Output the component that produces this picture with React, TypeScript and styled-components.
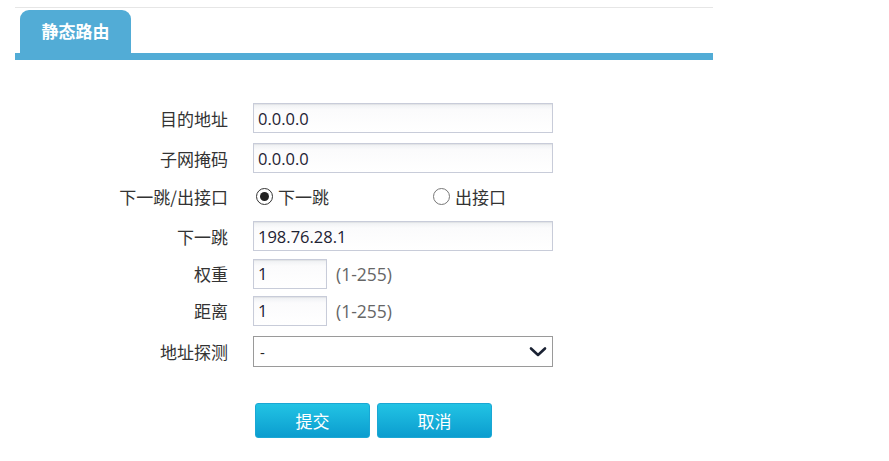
import React from "react";
import styled, { createGlobalStyle } from "styled-components";

const Global = createGlobalStyle`
  html, body { margin: 0; padding: 0; background: #fff; }
  body { font-family: "Open Sans", "Noto Sans CJK SC", sans-serif; color: #333; }
  * { box-sizing: border-box; }
`;

const Page = styled.div`
  width: 889px;
  height: 461px;
  padding-top: 7px;
`;

const Panel = styled.div`
  margin-left: 15px;
  width: 698px;
  border-top: 1px solid #e6e6e6;
`;

const TabBar = styled.div`
  display: flex;
  padding-left: 5px;
  padding-top: 2px;
  border-bottom: 7px solid #52acd6;
`;

const Tab = styled.div`
  width: 111px;
  height: 43px;
  background: #52acd6;
  border-radius: 9px 9px 0 0;
  color: #fff;
  font-family: "Noto Sans CJK SC", sans-serif;
  font-weight: 700;
  font-size: 17px;
  display: flex;
  align-items: center;
  justify-content: center;
  padding-bottom: 2px;
`;

const Form = styled.div`
  padding-top: 38px;
  display: grid;
  grid-template-columns: 213px 1fr;
  column-gap: 25px;
`;

const Label = styled.div<{ $h: number }>`
  height: ${(p) => p.$h}px;
  display: flex;
  align-items: center;
  justify-content: flex-end;
  font-family: "Noto Sans CJK SC", sans-serif;
  font-size: 17px;
  color: #333;
`;

const Cell = styled.div<{ $h: number }>`
  height: ${(p) => p.$h}px;
  display: flex;
  align-items: center;
`;

const TextInput = styled.div<{ $w: number }>`
  width: ${(p) => p.$w}px;
  height: 30px;
  border: 1px solid #c8ccd9;
  background: linear-gradient(#eef0f3 0px, #fbfbfc 6px, #fff 100%);
  box-shadow: inset 0 1px 1px rgba(0, 0, 0, 0.06);
  display: flex;
  align-items: center;
  padding-left: 4px;
  font-family: "Open Sans", sans-serif;
  font-size: 16.5px;
  color: #1e2233;
`;

const Hint = styled.span`
  margin-left: 9px;
  font-family: "Open Sans", sans-serif;
  font-size: 17.5px;
  color: #666;
`;

const RadioItem = styled.label<{ $w?: number }>`
  display: flex;
  align-items: center;
  width: ${(p) => (p.$w ? `${p.$w}px` : "auto")};
  font-family: "Noto Sans CJK SC", sans-serif;
  font-size: 17px;
  color: #333;
  padding-left: 3px;
`;

const RadioCircle = styled.span<{ $on?: boolean }>`
  width: 17px;
  height: 17px;
  border-radius: 50%;
  border: 1px solid ${(p) => (p.$on ? "#333" : "#777")};
  background: #fff;
  margin-right: 5px;
  display: flex;
  align-items: center;
  justify-content: center;
  &::after {
    content: "";
    width: 9px;
    height: 9px;
    border-radius: 50%;
    background: ${(p) => (p.$on ? "#222" : "transparent")};
  }
`;

const Select = styled.div`
  width: 300px;
  height: 31px;
  border: 1px solid #9a9a9a;
  background: #fff;
  display: flex;
  align-items: center;
  justify-content: space-between;
  padding: 0 5px 0 6px;
  font-family: "Open Sans", sans-serif;
  font-size: 15px;
  color: #222;
`;

const Buttons = styled.div`
  grid-column: 2;
  display: flex;
  gap: 7px;
  margin-top: 31px;
  padding-left: 2px;
`;

const Button = styled.button`
  width: 115px;
  height: 35px;
  border: 1px solid #1aa7d4;
  border-radius: 3px;
  background: linear-gradient(#22c3e4, #0b9dcf);
  color: #fff;
  font-family: "Noto Sans CJK SC", sans-serif;
  font-size: 17px;
  padding: 0;
  cursor: pointer;
`;

const Chevron = () => (
  <svg width="18" height="12" viewBox="0 0 18 12">
    <path d="M2 2.5 L9 9 L16 2.5" fill="none" stroke="#1a2233" strokeWidth="2.6" strokeLinecap="round" strokeLinejoin="round" />
  </svg>
);

export default function App() {
  return (
    <Page>
      <Global />
      <Panel>
        <TabBar>
          <Tab>静态路由</Tab>
        </TabBar>
        <Form>
          <Label $h={40}>目的地址</Label>
          <Cell $h={40}>
            <TextInput $w={300}>0.0.0.0</TextInput>
          </Cell>

          <Label $h={40}>子网掩码</Label>
          <Cell $h={40}>
            <TextInput $w={300}>0.0.0.0</TextInput>
          </Cell>

          <Label $h={37}>下一跳/出接口</Label>
          <Cell $h={37}>
            <RadioItem $w={177}>
              <RadioCircle $on />
              下一跳
            </RadioItem>
            <RadioItem>
              <RadioCircle />
              出接口
            </RadioItem>
          </Cell>

          <Label $h={42}>下一跳</Label>
          <Cell $h={42}>
            <TextInput $w={300}>198.76.28.1</TextInput>
          </Cell>

          <Label $h={33}>权重</Label>
          <Cell $h={33}>
            <TextInput $w={74}>1</TextInput>
            <Hint>(1-255)</Hint>
          </Cell>

          <Label $h={41}>距离</Label>
          <Cell $h={41}>
            <TextInput $w={74}>1</TextInput>
            <Hint>(1-255)</Hint>
          </Cell>

          <Label $h={41}>地址探测</Label>
          <Cell $h={41}>
            <Select>
              <span>-</span>
              <Chevron />
            </Select>
          </Cell>

          <Buttons>
            <Button>提交</Button>
            <Button>取消</Button>
          </Buttons>
        </Form>
      </Panel>
    </Page>
  );
}
